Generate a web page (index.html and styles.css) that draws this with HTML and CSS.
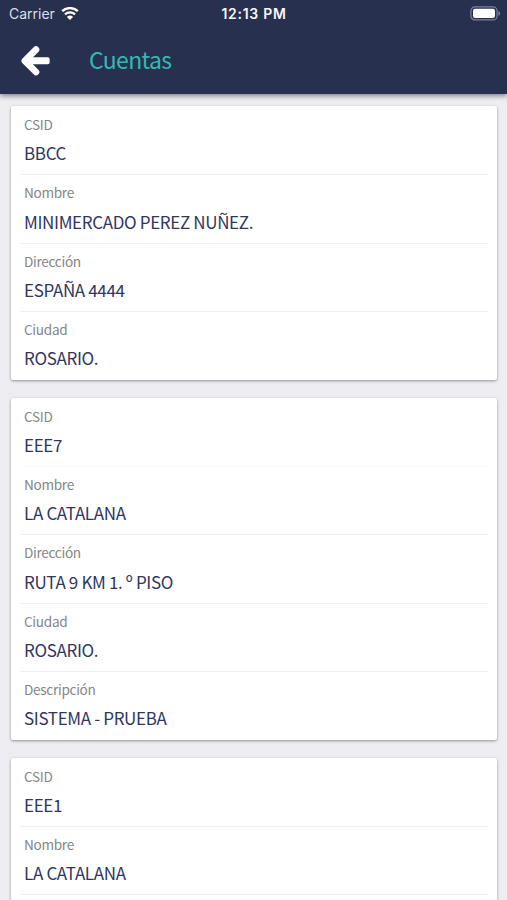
FILE: index.html
```html
<!DOCTYPE html>
<html lang="es">
<head>
    <meta charset="UTF-8">
    <meta name="viewport" content="width=device-width, initial-scale=1.0">
    <title>Cuentas</title>
    <link rel="stylesheet" href="styles.css">
</head>
<body>
    <header class="header">
        <div class="status-bar">
            <div class="carrier">
                <span>Carrier</span>
                <svg class="wifi" viewBox="0 0 18 14" width="18" height="14">
                    <path d="M1.2 4.2a11.2 11.2 0 0 1 15.6 0M4 7.4a7.2 7.2 0 0 1 10 0" fill="none" stroke="#fff" stroke-width="2.3"/>
                    <path d="M9 13L5.9 10a4.5 4.5 0 0 1 6.2 0z" fill="#fff"/>
                </svg>
            </div>
            <div class="time">12:13 PM</div>
            <svg class="battery" viewBox="0 0 31 15" width="31" height="15">
                <rect x="0.9" y="0.9" width="26.2" height="13" rx="4" fill="none" stroke="#7d819b" stroke-width="1.2"/>
                <rect x="3" y="2.8" width="22" height="9.2" rx="2" fill="#fff"/>
                <path d="M28.4 5v4.8q1.8-.8 1.8-2.4T28.4 5z" fill="#7d819b"/>
            </svg>
        </div>
        <div class="toolbar">
            <!-- flecha de volver -->
            <svg class="back" viewBox="0 0 30 32" width="30" height="32">
                <path d="M15 4.6L3.8 15.8L15 27" fill="none" stroke="#fff" stroke-width="6.6" stroke-linecap="round" stroke-linejoin="round"/>
                <rect x="5" y="12.3" width="23.6" height="7" rx="1.8" fill="#fff"/>
            </svg>
            <h1 class="title">Cuentas</h1>
        </div>
    </header>
    <main class="list">
        <div class="card">
            <div class="item">
                <div class="label">CSID</div>
                <div class="value">BBCC</div>
            </div>
            <div class="item">
                <div class="label">Nombre</div>
                <div class="value">MINIMERCADO PEREZ NUÑEZ.</div>
            </div>
            <div class="item">
                <div class="label">Dirección</div>
                <div class="value">ESPAÑA 4444</div>
            </div>
            <div class="item">
                <div class="label">Ciudad</div>
                <div class="value">ROSARIO.</div>
            </div>
        </div>
        <div class="card">
            <div class="item">
                <div class="label">CSID</div>
                <div class="value">EEE7</div>
            </div>
            <div class="item item-soft">
                <div class="label">Nombre</div>
                <div class="value">LA CATALANA</div>
            </div>
            <div class="item">
                <div class="label">Dirección</div>
                <div class="value">RUTA 9 KM 1. º PISO</div>
            </div>
            <div class="item">
                <div class="label">Ciudad</div>
                <div class="value">ROSARIO.</div>
            </div>
            <div class="item">
                <div class="label">Descripción</div>
                <div class="value">SISTEMA - PRUEBA</div>
            </div>
        </div>
        <div class="card card-last">
            <div class="item">
                <div class="label">CSID</div>
                <div class="value">EEE1</div>
            </div>
            <div class="item">
                <div class="label">Nombre</div>
                <div class="value">LA CATALANA</div>
            </div>
            <div class="item"></div>
        </div>
    </main>
</body>
</html>
```

FILE: styles.css
```css
* {
    box-sizing: border-box;
}
body {
    margin: 0;
    background-color: #eeedf2;
    font-family: "Noto Sans CJK SC", "Noto Sans", sans-serif;
}
.header {
    position: relative;
    height: 94px;
    background-color: #28304f;
    box-shadow: 0 2px 5px rgba(0, 0, 0, 0.45);
}
.status-bar {
    display: grid;
    grid-template-columns: 1fr auto 1fr;
    align-items: center;
    height: 27px;
    padding: 0 6px 0 9px;
    color: #f6f7fb;
    font-family: Inter, sans-serif;
    font-size: 14px;
}
.carrier {
    display: flex;
    align-items: center;
    gap: 6px;
    color: #dcdfe9;
}
.time {
    margin-right: 2px;
    font-weight: 600;
    letter-spacing: 0.7px;
}
.battery {
    justify-self: end;
}
.toolbar {
    display: flex;
    align-items: center;
    height: 67px;
    padding-left: 21px;
}
.title {
    margin: -4px 0 0 38px;
    color: #32b9b3;
    font-size: 23px;
    font-weight: 400;
    letter-spacing: -0.65px;
    line-height: 34px;
}
.list {
    height: 806px;
    padding: 12px 10px 0 11px;
    overflow: hidden;
}
.card {
    margin-bottom: 18px;
    padding: 0 9px;
    background-color: #fff;
    border-radius: 2px;
    box-shadow: 0 1px 3px rgba(0, 0, 0, 0.4);
}
.card-last {
    margin-bottom: 0;
}
.item {
    height: 68.4px;
    padding: 7px 4px 0;
    border-top: 1px solid #f0f0f2;
}
.item:first-child {
    border-top-color: transparent;
}
.item-soft {
    border-top-color: #fafafa;
}
.label {
    color: #858585;
    font-size: 13.6px;
    letter-spacing: -0.3px;
    line-height: 20px;
}
.value {
    margin-top: 6.2px;
    color: #313660;
    font-size: 17px;
    letter-spacing: -0.35px;
    line-height: 26px;
}
```
